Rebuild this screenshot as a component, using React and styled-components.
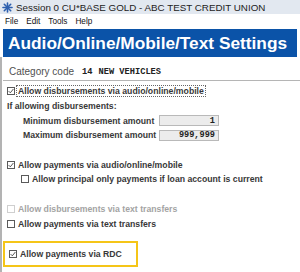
import React from 'react'
import styled, { createGlobalStyle } from 'styled-components'

const GlobalStyle = createGlobalStyle`
  html, body {
    margin: 0;
    padding: 0;
    background: #fff;
  }
  body {
    font-family: "Liberation Sans", Arial, sans-serif;
  }
`

const Window = styled.div`
  width: 300px;
  height: 272px;
  overflow: hidden;
  background: #fff;
  display: flex;
  flex-direction: column;
`

const TitleBar = styled.div`
  height: 14px;
  background: #e2e8f0;
  display: flex;
  align-items: center;
  gap: 3px;
  padding-left: 2px;
  font-size: 9.8px;
  color: #222;
  white-space: nowrap;
`

const MenuBar = styled.div`
  height: 14px;
  display: flex;
  align-items: center;
  gap: 8px;
  padding-left: 5px;
  font-size: 8.2px;
  color: #111;
`

const Header = styled.div`
  margin: 1px 3px 0;
  height: 28px;
  background: #0b53a8;
  color: #fff;
  font-weight: bold;
  font-size: 17.3px;
  display: flex;
  align-items: center;
  padding-left: 5px;
  white-space: nowrap;
`

const Panel = styled.div`
  flex: 1;
  border-left: 2px solid #b3b3b3;
  display: flex;
  flex-direction: column;
`

const CategoryLine = styled.div`
  height: 24px;
  display: flex;
  align-items: center;
  padding: 6px 0 0 6px;
  font-size: 10px;
  color: #505050;
  border-bottom: 1px solid #b5b5b5;
  margin-left: 1px;
  box-sizing: border-box;
`

const Mono = styled.span`
  font-family: "Liberation Mono", "Courier New", monospace;
  font-weight: bold;
  font-size: 8.7px;
  color: #222;
  margin-left: ${(p) => p.gap}px;
`

const Rows = styled.div`
  display: flex;
  flex-direction: column;
  padding-top: 3px;
`

const Row = styled.div`
  height: 14.7px;
  display: flex;
  align-items: center;
  padding-left: ${(p) => p.indent || 5}px;
  margin-top: ${(p) => p.skip || 0}px;
  font-size: 8.7px;
  font-weight: bold;
  color: ${(p) => (p.disabled ? '#a3a3a3' : '#383838')};
  white-space: nowrap;
`

const AmountRow = styled.div`
  height: 14.7px;
  display: grid;
  grid-template-columns: 136px 60px;
  align-items: center;
  padding-left: 21px;
  font-size: 8.7px;
  font-weight: bold;
  color: #383838;
  white-space: nowrap;
`

const AmountBox = styled.div`
  height: 11px;
  box-sizing: border-box;
  background: #ececec;
  border: 1px solid #b9b9b9;
  display: flex;
  align-items: center;
  justify-content: flex-end;
  padding-right: 3px;
  font-family: "Liberation Mono", "Courier New", monospace;
  font-weight: bold;
  font-size: 8.6px;
  color: #222;
`

const Box = styled.span`
  width: 8px;
  height: 8px;
  box-sizing: border-box;
  border: 1px solid ${(p) => (p.disabled ? '#cfcfcf' : '#5a5a5a')};
  background: #fff;
  display: inline-flex;
  align-items: center;
  justify-content: center;
  margin-right: 1px;
  flex-shrink: 0;
`

const Label = styled.span`
  padding: 0 1px;
  border: 1px ${(p) => (p.focused ? 'dotted #666' : 'solid transparent')};
  line-height: 10px;
`

const Highlight = styled.div`
  margin: 10px 0 0 1px;
  width: 135px;
  height: 26px;
  box-sizing: border-box;
  border: 2px solid #f5c518;
  display: flex;
  align-items: center;
  padding-left: 2px;
`

const Asterisk = () => (
  <svg width="11" height="11" viewBox="0 0 11 11">
    <g stroke="#2d5fae" strokeWidth="1.6" strokeLinecap="round">
      <line x1="5.5" y1="1" x2="5.5" y2="10" />
      <line x1="1" y1="5.5" x2="10" y2="5.5" />
      <line x1="2.3" y1="2.3" x2="8.7" y2="8.7" />
      <line x1="2.3" y1="8.7" x2="8.7" y2="2.3" />
    </g>
  </svg>
)

const Checkbox = ({ checked, disabled }) => (
  <Box disabled={disabled}>
    {checked && (
      <svg width="6" height="6" viewBox="0 0 6 6">
        <polyline
          points="0.6,3.1 2.3,4.8 5.4,1"
          fill="none"
          stroke="#444"
          strokeWidth="0.9"
        />
      </svg>
    )}
  </Box>
)

const Option = ({ label, checked, disabled, focused, indent, skip }) => (
  <Row indent={indent} skip={skip} disabled={disabled}>
    <Checkbox checked={checked} disabled={disabled} />
    <Label focused={focused}>{label}</Label>
  </Row>
)

export default function App() {
  return (
    <>
      <GlobalStyle />
      <Window>
        <TitleBar>
          <Asterisk />
          <span>Session 0 CU*BASE GOLD - ABC TEST CREDIT UNION</span>
        </TitleBar>
        <MenuBar>
          <span>File</span>
          <span>Edit</span>
          <span>Tools</span>
          <span>Help</span>
        </MenuBar>
        <Header>Audio/Online/Mobile/Text Settings</Header>
        <Panel>
          <CategoryLine>
            Category code
            <Mono gap={8}>14</Mono>
            <Mono gap={6}>NEW VEHICLES</Mono>
          </CategoryLine>
          <Rows>
            <Option
              label="Allow disbursements via audio/online/mobile"
              checked
              focused
            />
            <Row>If allowing disbursements:</Row>
            <AmountRow>
              <span>Minimum disbursement amount</span>
              <AmountBox>1</AmountBox>
            </AmountRow>
            <AmountRow>
              <span>Maximum disbursement amount</span>
              <AmountBox>999,999</AmountBox>
            </AmountRow>
            <Option
              label="Allow payments via audio/online/mobile"
              checked
              skip={14.7}
            />
            <Option
              label="Allow principal only payments if loan account is current"
              indent={19}
            />
            <Option
              label="Allow disbursements via text transfers"
              disabled
              skip={14.7}
            />
            <Option label="Allow payments via text transfers" />
            <Highlight>
              <Option label="Allow payments via RDC" checked indent={2} />
            </Highlight>
          </Rows>
        </Panel>
      </Window>
    </>
  )
}
